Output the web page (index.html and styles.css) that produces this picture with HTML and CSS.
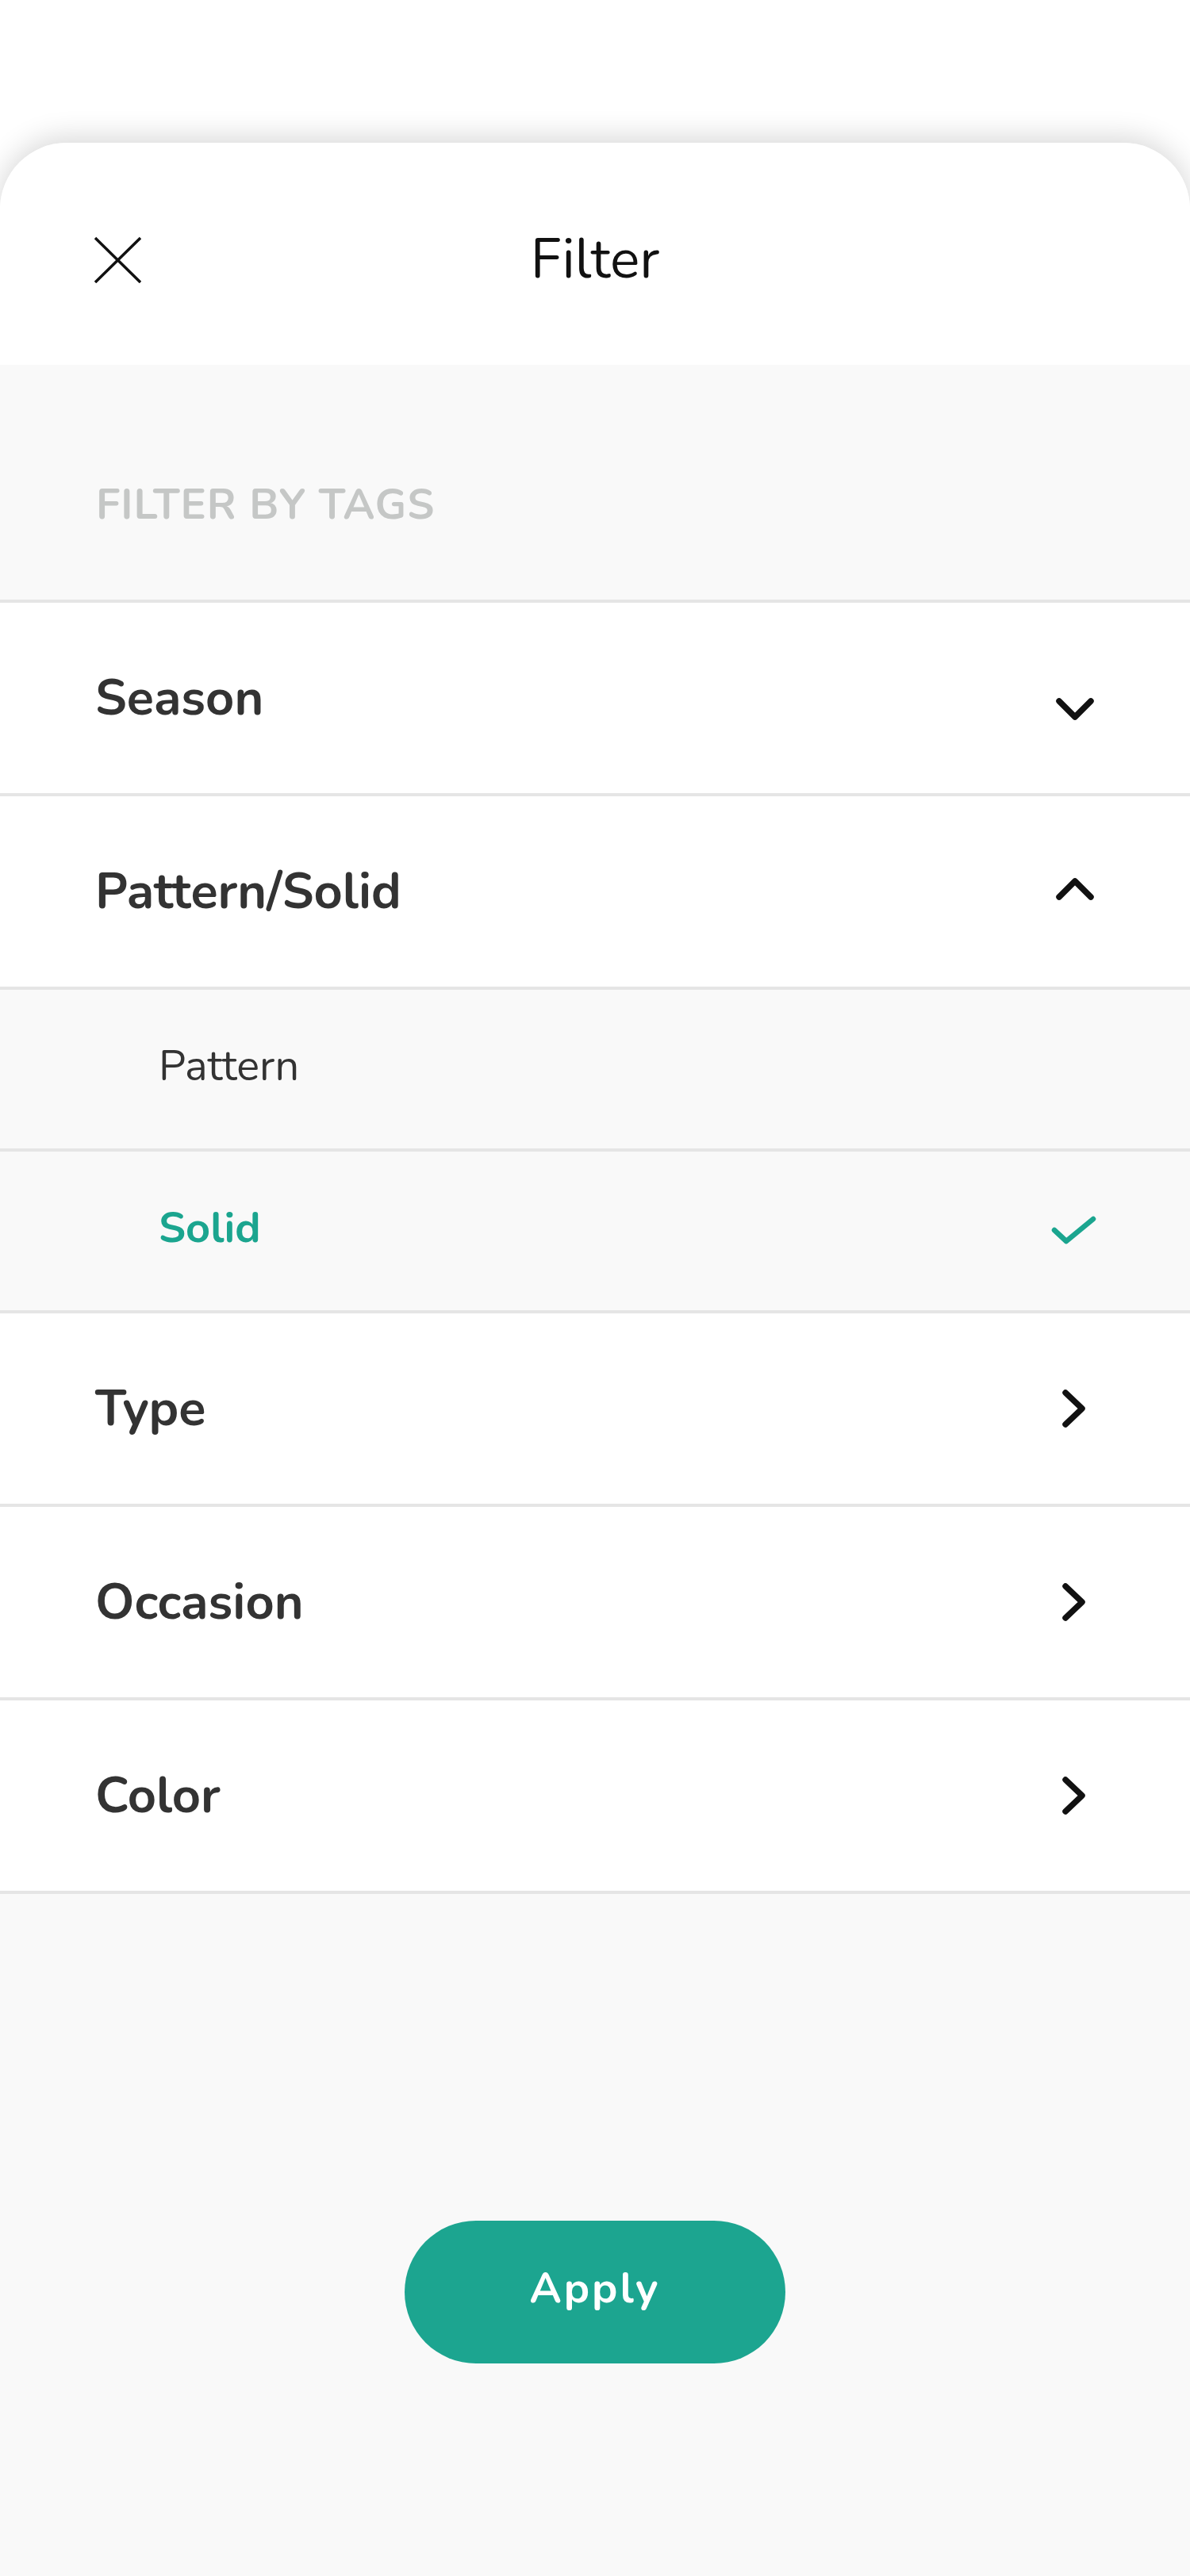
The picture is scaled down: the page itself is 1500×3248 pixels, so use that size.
FILE: index.html
```html
<!DOCTYPE html>
<html lang="en">
<head>
  <meta charset="UTF-8">
  <title>Filter</title>
  <link rel="stylesheet" href="styles.css">
</head>
<body>

  <div class="top-space"></div>

  <div class="sheet">
    <div class="sheet-header">
      <button class="close-btn" aria-label="Close">
        <svg width="60" height="60" viewBox="0 0 60 60">
          <path d="M2 3 L59 59 M59 3 L2 59" stroke="#111" stroke-width="3.5" fill="none"/>
        </svg>
      </button>
      <div class="title">Filter</div>
    </div>

    <div class="section-label">FILTER BY TAGS</div>

    <div class="filter-list">
      <div class="filter-row">
        <span>Season</span>
        <svg class="icon" width="60" height="60" viewBox="0 0 60 60">
          <polyline points="10,34 30,54 50,34" stroke="#111" stroke-width="7.5" stroke-linecap="round" stroke-linejoin="round" fill="none"/>
        </svg>
      </div>

      <div class="filter-row">
        <span>Pattern/Solid</span>
        <svg class="icon" width="60" height="60" viewBox="0 0 60 60">
          <polyline points="10,37 30,17 50,37" stroke="#111" stroke-width="7.5" stroke-linecap="round" stroke-linejoin="round" fill="none"/>
        </svg>
      </div>

      <div class="sub-row">
        <span>Pattern</span>
      </div>

      <div class="sub-row selected">
        <span>Solid</span>
        <svg class="icon" width="60" height="60" viewBox="0 0 60 60">
          <polyline points="4,29 19,43 53,15" stroke="#1ba58f" stroke-width="6.5" stroke-linecap="round" stroke-linejoin="round" fill="none"/>
        </svg>
      </div>

      <div class="filter-row">
        <span>Type</span>
        <svg class="icon" width="60" height="60" viewBox="0 0 60 60">
          <polyline points="18,10 39,30 18,50" stroke="#111" stroke-width="7.5" stroke-linecap="round" stroke-linejoin="round" fill="none"/>
        </svg>
      </div>

      <div class="filter-row">
        <span>Occasion</span>
        <svg class="icon" width="60" height="60" viewBox="0 0 60 60">
          <polyline points="18,10 39,30 18,50" stroke="#111" stroke-width="7.5" stroke-linecap="round" stroke-linejoin="round" fill="none"/>
        </svg>
      </div>

      <div class="filter-row">
        <span>Color</span>
        <svg class="icon" width="60" height="60" viewBox="0 0 60 60">
          <polyline points="18,10 39,30 18,50" stroke="#111" stroke-width="7.5" stroke-linecap="round" stroke-linejoin="round" fill="none"/>
        </svg>
      </div>
    </div>

    <div class="actions">
      <button class="apply-btn">Apply</button>
    </div>
  </div>

</body>
</html>
```

FILE: styles.css
```css
* {
  box-sizing: border-box;
  margin: 0;
  padding: 0;
  font-family: "Nunito", Lato, "Open Sans", sans-serif;
}

body {
  background-color: #fff;
  width: 1500px;
  overflow: hidden;
}

.top-space {
  height: 180px;
}

/* Bottom sheet */
.sheet {
  background-color: #f9f9f9;
  border-radius: 84px 84px 0 0;
  box-shadow: 0 -6px 36px rgba(0, 0, 0, 0.16);
  overflow: hidden;
  height: 3068px;
}

.sheet-header {
  position: relative;
  height: 280px;
  background-color: #fff;
  display: flex;
  align-items: center;
  justify-content: center;
  padding-top: 14px;
}

.close-btn {
  position: absolute;
  left: 118px;
  top: 117px;
  background: none;
  border: none;
  width: 60px;
  height: 60px;
}

.close-btn svg {
  display: block;
}

.title {
  font-size: 70px;
  color: #111;
}

.section-label {
  height: 300px;
  padding: 56px 121px 0;
  display: flex;
  align-items: center;
  font-size: 54px;
  font-weight: 700;
  color: #c5c7c6;
  letter-spacing: 1px;
  border-bottom: 4px solid #e5e5e5;
}

/* Rows */
.filter-row,
.sub-row {
  display: flex;
  align-items: center;
  justify-content: space-between;
  border-bottom: 4px solid #e5e5e5;
  padding: 0 115px 0 120px;
}

.filter-row {
  height: 244px;
  background-color: #fff;
  font-size: 63px;
  font-weight: 700;
  color: #333;
}

.sub-row {
  height: 204px;
  background-color: #f9f9f9;
  padding-left: 200px;
  font-size: 54px;
  color: #333;
}

.sub-row span {
  margin-top: -8px;
}

.sub-row.selected {
  color: #1ba58f;
  font-weight: 700;
}

.icon {
  display: block;
  flex-shrink: 0;
}

/* Apply */
.actions {
  display: flex;
  justify-content: center;
  padding-top: 412px;
}

.apply-btn {
  width: 480px;
  height: 180px;
  padding-bottom: 10px;
  border: none;
  border-radius: 90px;
  background-color: #1ca590;
  color: #fff;
  font-size: 54px;
  font-weight: 700;
  letter-spacing: 3px;
}
```
